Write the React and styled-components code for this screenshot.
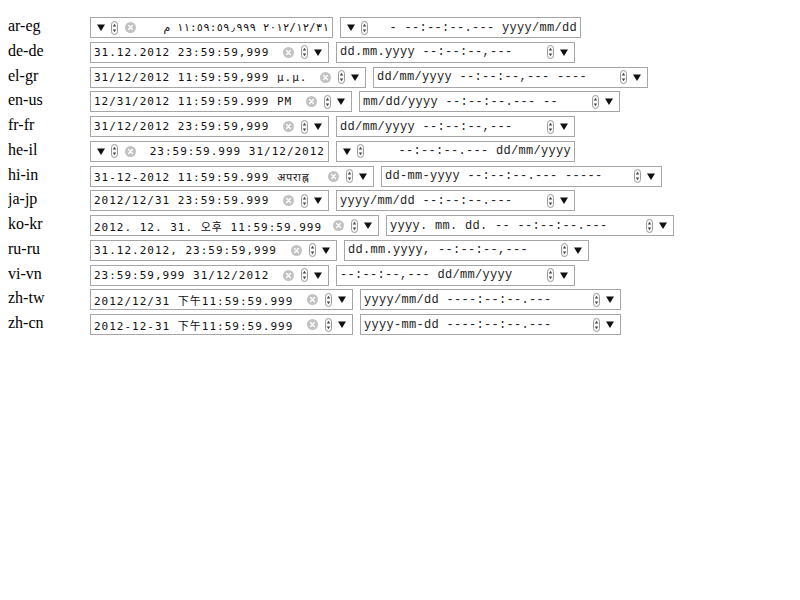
import styled, { createGlobalStyle } from "styled-components"

const GlobalStyle = createGlobalStyle`
    body {
        margin: 8px;
        background: #ffffff;
        font-family: "Liberation Serif", "Times New Roman", serif;
    }
`

const List = styled.div`
    display: flex;
    flex-direction: column;
    gap: 3.75px;
    padding-top: 9px;
`
const Row = styled.div`
    display: flex;
    align-items: flex-start;
    height: 21px;
`
const Locale = styled.div`
    width: 82px;
    flex: none;
    font-size: 16px;
    line-height: 18px;
    color: #000000;
`
const Box = styled.div`
    box-sizing: border-box;
    width: ${(props) => props.w}px;
    height: 21px;
    margin-right: 7px;
    flex: none;
    display: flex;
    flex-direction: ${(props) => (props.rtl ? "row-reverse" : "row")};
    align-items: center;
    border: 1px solid #a6a6a6;
    background: #ffffff;
    padding: ${(props) => (props.rtl ? "0 3px 0 6px" : "0 6px 0 3px")};
    overflow: hidden;
`
const Value = styled.span`
    white-space: pre;
    font-family: ${(props) =>
        props.empty
            ? `"Liberation Mono", "DejaVu Sans Mono"`
            : `"DejaVu Sans Mono", "Liberation Mono"`}, "DejaVu Sans",
        "Noto Sans CJK KR", "Noto Sans CJK SC", monospace;
    font-size: ${(props) => (props.empty ? "12px" : "11px")};
    letter-spacing: ${(props) => (props.empty ? "0.3px" : "1px")};
    color: ${(props) => (props.empty ? "#222222" : "#111111")};
    direction: ltr;
    unicode-bidi: bidi-override;
`
const Controls = styled.div`
    margin-left: ${(props) => (props.rtl ? "0" : "auto")};
    margin-right: ${(props) => (props.rtl ? "auto" : "0")};
    display: flex;
    flex-direction: ${(props) => (props.rtl ? "row-reverse" : "row")};
    align-items: center;
    gap: 6px;
    flex: none;
`
const ClearIcon = styled.svg`
    display: block;
    width: 11px;
    height: 11px;
    margin: ${(props) => (props.rtl ? "0 0 0 1px" : "0 1px 0 0")};
`
const SpinIcon = styled.svg`
    display: block;
    width: 7px;
    height: 14px;
`
const DropIcon = styled.svg`
    display: block;
    width: 8px;
    height: 7px;
`

function Clear({ rtl }) {
    return (
        <ClearIcon viewBox="0 0 11 11" rtl={rtl}>
            <circle cx="5.5" cy="5.5" r="5.5" fill="#c2c2c2" />
            <path
                d="M3.6 3.6 L7.4 7.4 M7.4 3.6 L3.6 7.4"
                stroke="#ffffff"
                strokeWidth="1.4"
                strokeLinecap="round"
            />
        </ClearIcon>
    )
}

function Spin() {
    return (
        <SpinIcon viewBox="0 0 7 14">
            <rect
                x="0.5"
                y="0.5"
                width="6"
                height="13"
                rx="3"
                fill="#f8f8f8"
                stroke="#9a9a9a"
            />
            <path d="M3.5 2.8 L5.2 5.4 L1.8 5.4 Z" fill="#444444" />
            <path d="M3.5 11.2 L5.2 8.6 L1.8 8.6 Z" fill="#444444" />
        </SpinIcon>
    )
}

function Drop() {
    return (
        <DropIcon viewBox="0 0 8 7">
            <path d="M0 0.5 L8 0.5 L4 7 Z" fill="#111111" />
        </DropIcon>
    )
}

function Field({ value, w, rtl, empty }) {
    return (
        <Box w={w} rtl={rtl}>
            <Value empty={empty}>{value}</Value>
            <Controls rtl={rtl}>
                {!empty && <Clear rtl={rtl} />}
                <Spin />
                <Drop />
            </Controls>
        </Box>
    )
}

const rows = [
    {
        locale: "ar-eg",
        rtl: true,
        value: "م ١١:٥٩:٥٩٫٩٩٩ ٢٠١٢/١٢/٣١",
        empty: "- --:--:--.--- yyyy/mm/dd",
        w: [243, 241],
    },
    {
        locale: "de-de",
        value: "31.12.2012 23:59:59,999",
        empty: "dd.mm.yyyy --:--:--,---",
        w: [239, 239],
    },
    {
        locale: "el-gr",
        value: "31/12/2012 11:59:59,999 μ.μ.",
        empty: "dd/mm/yyyy --:--:--,--- ----",
        w: [276, 275],
    },
    {
        locale: "en-us",
        value: "12/31/2012 11:59:59.999 PM",
        empty: "mm/dd/yyyy --:--:--.--- --",
        w: [262, 261],
    },
    {
        locale: "fr-fr",
        value: "31/12/2012 23:59:59,999",
        empty: "dd/mm/yyyy --:--:--,---",
        w: [239, 239],
    },
    {
        locale: "he-il",
        rtl: true,
        value: "23:59:59.999 31/12/2012",
        empty: "--:--:--.--- dd/mm/yyyy",
        w: [239, 239],
    },
    {
        locale: "hi-in",
        value: "31-12-2012 11:59:59.999 अपराह्न",
        empty: "dd-mm-yyyy --:--:--.--- -----",
        w: [284, 281],
    },
    {
        locale: "ja-jp",
        value: "2012/12/31 23:59:59.999",
        empty: "yyyy/mm/dd --:--:--.---",
        w: [239, 239],
    },
    {
        locale: "ko-kr",
        value: "2012. 12. 31. 오후 11:59:59.999",
        empty: "yyyy. mm. dd. -- --:--:--.---",
        w: [289, 288],
    },
    {
        locale: "ru-ru",
        value: "31.12.2012, 23:59:59,999",
        empty: "dd.mm.yyyy, --:--:--,---",
        w: [247, 245],
    },
    {
        locale: "vi-vn",
        value: "23:59:59,999 31/12/2012",
        empty: "--:--:--,--- dd/mm/yyyy",
        w: [239, 239],
    },
    {
        locale: "zh-tw",
        value: "2012/12/31 下午11:59:59.999",
        empty: "yyyy/mm/dd ----:--:--.---",
        w: [263, 261],
    },
    {
        locale: "zh-cn",
        value: "2012-12-31 下午11:59:59.999",
        empty: "yyyy-mm-dd ----:--:--.---",
        w: [263, 261],
    },
]

export default function App() {
    return (
        <>
            <GlobalStyle />
            <List>
                {rows.map((row) => (
                    <Row key={row.locale}>
                        <Locale>{row.locale}</Locale>
                        <Field value={row.value} w={row.w[0]} rtl={row.rtl} />
                        <Field
                            value={row.empty}
                            w={row.w[1]}
                            rtl={row.rtl}
                            empty
                        />
                    </Row>
                ))}
            </List>
        </>
    )
}
